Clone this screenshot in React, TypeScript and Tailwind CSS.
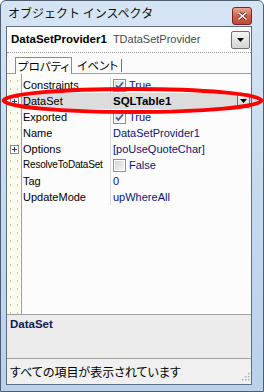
import React from "react";

const SANS = "font-['Liberation_Sans','Noto_Sans_CJK_JP',sans-serif]";
const JP = "font-['Noto_Sans_CJK_JP','Liberation_Sans',sans-serif]";

type Row = {
  name: string;
  value: string;
  check?: boolean;
  selected?: boolean;
  plus?: boolean;
  narrow?: boolean;
};

const rows: Row[] = [
  { name: "Constraints", value: "True", check: true },
  { name: "DataSet", value: "SQLTable1", selected: true, plus: true },
  { name: "Exported", value: "True", check: true },
  { name: "Name", value: "DataSetProvider1" },
  { name: "Options", value: "[poUseQuoteChar]", plus: true },
  { name: "ResolveToDataSet", value: "False", check: false, narrow: true },
  { name: "Tag", value: "0" },
  { name: "UpdateMode", value: "upWhereAll" },
];

function CheckBox({ checked }: { checked: boolean }) {
  return (
    <svg width="13" height="13" viewBox="0 0 13 13" className="shrink-0">
      <defs>
        <linearGradient id={checked ? "cbg1" : "cbg0"} x1="0" y1="0" x2="1" y2="1">
          <stop offset="0" stopColor={checked ? "#dcdcdc" : "#d2d2d2"} />
          <stop offset="1" stopColor={checked ? "#ffffff" : "#f6f6f6"} />
        </linearGradient>
      </defs>
      <rect x="0.5" y="0.5" width="12" height="12" fill="#fff" stroke="#8f8f8f" />
      <rect x="2" y="2" width="9" height="9" fill={`url(#${checked ? "cbg1" : "cbg0"})`} />
      {checked && (
        <path d="M3 6.3 L5.4 8.8 L10 3.4" fill="none" stroke="#4a64a0" strokeWidth="1.8" />
      )}
    </svg>
  );
}

function PlusBox() {
  return (
    <svg width="9" height="9" viewBox="0 0 9 9">
      <rect x="0.5" y="0.5" width="8" height="8" fill="#fff" stroke="#8c8c8c" />
      <path d="M2 4.5 H7 M4.5 2 V7" stroke="#2b3a8a" strokeWidth="1" />
    </svg>
  );
}

function DropBtn({ w, h }: { w: number; h: number }) {
  return (
    <div
      className="flex items-center justify-center rounded-[2px] border border-[#707070] bg-gradient-to-b from-[#f4f4f4] to-[#d4d4d4] shrink-0"
      style={{ width: w, height: h }}
    >
      <svg width="7" height="4" viewBox="0 0 7 4">
        <path d="M0 0 H7 L3.5 4 Z" fill="#000" />
      </svg>
    </div>
  );
}

function Gutter({ children }: { children?: React.ReactNode }) {
  return (
    <div className="w-[15px] shrink-0 self-stretch border-r border-[#a0a0a0] bg-[#fcfcee] bg-[radial-gradient(circle,#c8c8b4_0.7px,transparent_0.9px)] bg-[length:7px_8px] flex items-center justify-center">
      {children}
    </div>
  );
}

export default function App() {
  return (
    <div className={`relative w-[264px] h-[392px] overflow-hidden bg-white ${SANS}`}>
      <div className="w-[264px] h-[392px] border border-[#4d5d72] rounded-t-[6px] bg-gradient-to-b from-[#d6e5f5] via-[#c6daef] to-[#b9d1ea] flex flex-col">
        {/* Title bar */}
        <div className="h-[25px] flex items-start shrink-0 pl-[7px] pr-[11px]">
          <div className={`${JP} text-[12px] leading-[25px] text-[#111] -mt-[1px]`}>
            オブジェクト インスペクタ
          </div>
          <div className="ml-auto mt-[6px] w-[20px] h-[18px] rounded-[3px] border border-[#6e2a22] bg-gradient-to-b from-[#e9a695] via-[#d1604a] to-[#c24a36] flex items-center justify-center">
            <svg width="9" height="8" viewBox="0 0 9 8">
              <path d="M1 1 L8 7 M8 1 L1 7" stroke="#4a1a14" strokeWidth="3" strokeLinecap="square" />
              <path d="M1 1 L8 7 M8 1 L1 7" stroke="#fff" strokeWidth="1.6" strokeLinecap="square" />
            </svg>
          </div>
        </div>

        {/* Client area */}
        <div className="flex-1 ml-[5px] mr-[11px] mb-[6px] border border-[#5f6d80] bg-white flex flex-col overflow-hidden">
          {/* Combo */}
          <div className="h-[25px] shrink-0 flex items-center pl-[4px] pr-[1px]">
            <span className="text-[11.5px] font-bold text-black">DataSetProvider1</span>
            <span className="ml-[6px] text-[11px] text-[#4a4a4a]">TDataSetProvider</span>
            <div className="ml-auto">
              <DropBtn w={19} h={18} />
            </div>
          </div>
          <div className="h-px shrink-0 border-b border-dotted border-[#9a9a9a]" />

          {/* Tabs */}
          <div className="h-[21px] shrink-0 flex items-end pl-[8px] border-b border-[#a0a0a0] bg-[#fafafa]">
            <div
              className={`${JP} [font-feature-settings:'palt'] h-[17px] -mb-px px-[2px] bg-white border border-b-0 border-[#8a8a8a] text-[11.5px] leading-[16px] text-black whitespace-nowrap`}
            >
              プロパティ
            </div>
            <div
              className={`${JP} [font-feature-settings:'palt'] h-[13px] mb-[1px] pl-[5px] pr-[3px] border-r border-[#707070] text-[11.5px] leading-[12px] text-black whitespace-nowrap`}
            >
              イベント
            </div>
          </div>

          {/* Grid */}
          <div className="flex-1 flex flex-col bg-[#fcfcfc] overflow-hidden">
            <div className="h-[3px] flex shrink-0">
              <Gutter />
            </div>
            {rows.map((r) => (
              <div key={r.name} className="h-[16px] flex shrink-0">
                <Gutter>{r.plus && <PlusBox />}</Gutter>
                <div
                  className={`w-[89px] shrink-0 pl-[1px] border-r border-[#d8d8d8] overflow-hidden whitespace-nowrap leading-[16px] text-black ${
                    r.narrow ? "text-[10px] tracking-[-0.2px]" : "text-[11px]"
                  } ${r.selected ? "bg-[#dcdcdc]" : ""}`}
                >
                  {r.name}
                </div>
                <div
                  className={`flex-1 flex items-center pl-[2px] overflow-hidden whitespace-nowrap ${
                    r.selected ? "bg-[#dcdcdc]" : ""
                  }`}
                >
                  {r.check !== undefined && <CheckBox checked={r.check} />}
                  <span
                    className={`leading-[16px] ${r.check !== undefined ? "ml-[3px]" : ""} ${
                      r.selected ? "text-[11.5px] font-bold text-black" : "text-[11px] text-[#0a1478]"
                    }`}
                  >
                    {r.value}
                  </span>
                  {r.selected && (
                    <div className="ml-auto mr-[1px]">
                      <DropBtn w={13} h={14} />
                    </div>
                  )}
                </div>
              </div>
            ))}
            <div className="flex-1 flex">
              <Gutter />
            </div>
          </div>

          {/* Description */}
          <div className="h-[45px] shrink-0 border-y border-[#a0a0a0] bg-[#ececec] pl-[3px] pt-[2px]">
            <div className="text-[11.5px] font-bold text-[#0c1a55] leading-[14px]">DataSet</div>
          </div>

          {/* Status bar */}
          <div className="relative h-[25px] shrink-0 bg-[#f0f0f0] flex items-center pl-[3px]">
            <span className={`${JP} [font-feature-settings:'palt'] text-[12px] text-black`}>
              すべての項目が表示されています
            </span>
            <svg className="absolute right-[1px] bottom-[3px]" width="10" height="10" viewBox="0 0 10 10">
              {[
                [8, 2],
                [8, 5],
                [5, 5],
                [8, 8],
                [5, 8],
                [2, 8],
              ].map(([x, y], i) => (
                <rect key={i} x={x} y={y} width="1.5" height="1.5" fill="#b0b0b0" />
              ))}
            </svg>
          </div>
        </div>
      </div>

      {/* Red annotation ellipse */}
      <svg className="absolute left-0 top-0 pointer-events-none" width="264" height="392" viewBox="0 0 264 392">
        <ellipse cx="132.5" cy="100.5" rx="129" ry="11.5" fill="none" stroke="#ff0000" strokeWidth="4" />
      </svg>
    </div>
  );
}
